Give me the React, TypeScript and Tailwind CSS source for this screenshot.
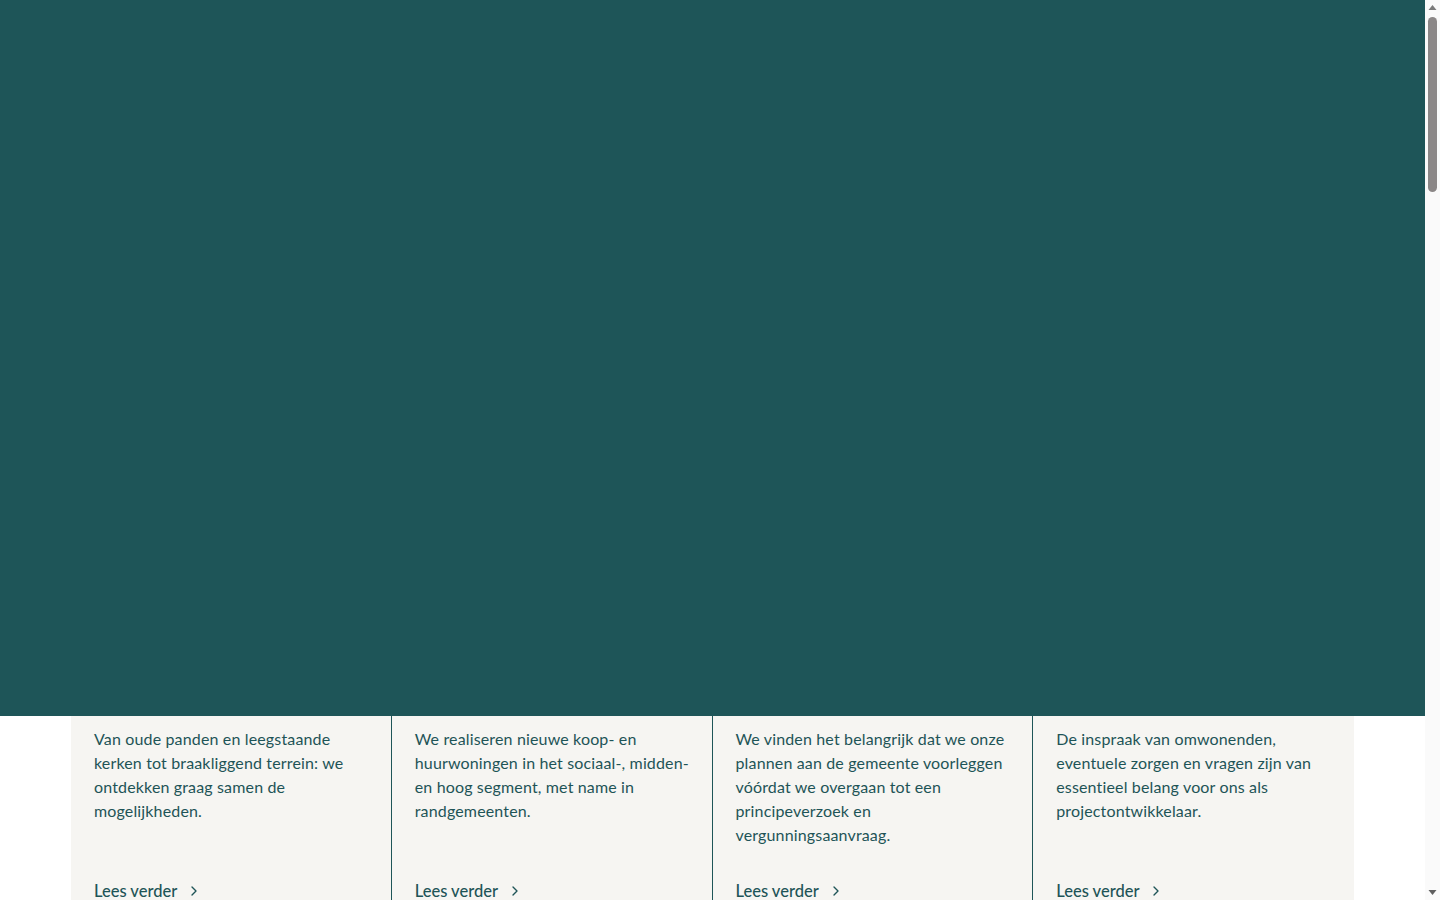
import { ChevronRight } from "lucide-react";

const cards = [
  "Van oude panden en leegstaande kerken tot braakliggend terrein: we ontdekken graag samen de mogelijkheden.",
  "We realiseren nieuwe koop- en huurwoningen in het sociaal-, midden- en hoog segment, met name in randgemeenten.",
  "We vinden het belangrijk dat we onze plannen aan de gemeente voorleggen vóórdat we overgaan tot een principeverzoek en vergunningsaanvraag.",
  "De inspraak van omwonenden, eventuele zorgen en vragen zijn van essentieel belang voor ons als projectontwikkelaar.",
];

function FakeScrollbar() {
  return (
    <div className="flex h-[900px] w-[15px] shrink-0 flex-col items-center bg-[#fafafa]">
      <svg width="15" height="15" viewBox="0 0 15 15" className="shrink-0">
        <path d="M3.5 10 L7.5 5 L11.5 10 Z" fill="#7a7a7a" />
      </svg>
      <div className="mt-[2px] h-[175px] w-[9px] rounded-full bg-[#8b8787]" />
      <div className="flex-1" />
      <svg width="15" height="15" viewBox="0 0 15 15" className="shrink-0">
        <path d="M3.5 5 L7.5 10 L11.5 5 Z" fill="#5f5f5f" />
      </svg>
    </div>
  );
}

export default function App() {
  return (
    <div className="flex h-[900px] overflow-hidden bg-white font-['Lato',sans-serif] text-[#1e5457]">
      <main className="min-w-0 flex-1">
        <section className="h-[716px] bg-[#1e5558]" />
        <div className="mx-auto grid w-[1283px] grid-cols-4 bg-[#f6f5f2]">
          {cards.map((text, i) => (
            <div
              key={i}
              className={
                "flex flex-col pl-[23px] pr-[14px] pt-[11px] pb-[40px] " +
                (i < 3 ? "border-r border-[#1e5558]" : "")
              }
            >
              <p className="text-[16px] leading-[24px] tracking-[0.15px]">{text}</p>
              <a
                href="#"
                className="mt-auto flex items-center gap-[9px] pt-8 text-[16.5px] font-medium leading-[24px]"
              >
                Lees verder
                <ChevronRight size={16} strokeWidth={2} />
              </a>
            </div>
          ))}
        </div>
      </main>
      <FakeScrollbar />
    </div>
  );
}
